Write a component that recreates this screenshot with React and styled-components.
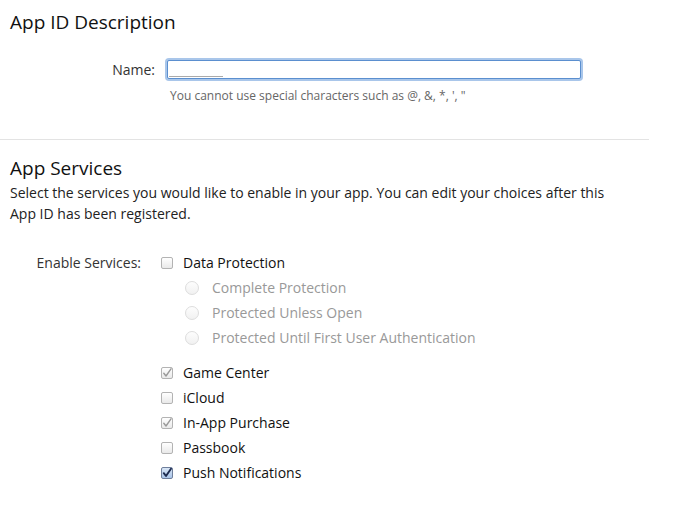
import styled, { createGlobalStyle } from "styled-components";

const GlobalStyle = createGlobalStyle`
  body {
    margin: 0;
    background: #fff;
    font-family: "Open Sans", "Liberation Sans", sans-serif;
    color: #333;
  }
`;

const services = [
  { name: "Game Center", state: "locked" },
  { name: "iCloud", state: "off" },
  { name: "In-App Purchase", state: "locked" },
  { name: "Passbook", state: "off" },
  { name: "Push Notifications", state: "on" },
];

const protections = [
  "Complete Protection",
  "Protected Unless Open",
  "Protected Until First User Authentication",
];

function Check({ state }) {
  return (
    <CheckBox $state={state}>
      {state !== "off" && (
        <svg width="10" height="10" viewBox="0 0 10 10">
          <path
            d="M1.8 5.2 L4 8 L9 0.8"
            fill="none"
            stroke={state === "on" ? "#1d2b4f" : "#9a9a9a"}
            strokeWidth={state === "on" ? 1.9 : 1.4}
            strokeLinecap="round"
            strokeLinejoin="round"
          />
        </svg>
      )}
    </CheckBox>
  );
}

export default function App() {
  return (
    <Page>
      <GlobalStyle />
      <Section>
        <Heading>App ID Description</Heading>
        <FormRow>
          <Label $width={155}>Name:</Label>
          <Field>
            <Input />
            <Hint>You cannot use special characters such as @, &amp;, *, ', "</Hint>
          </Field>
        </FormRow>
      </Section>
      <Divider />
      <Section $top={15}>
        <Heading>App Services</Heading>
        <Description>
          Select the services you would like to enable in your app. You can edit your choices after this
          App ID has been registered.
        </Description>
        <ServicesRow>
          <Label $width={141} $lineHeight={25}>Enable Services:</Label>
          <List>
            <Option>
              <Check state="off" />
              <OptionText>Data Protection</OptionText>
            </Option>
            <SubList>
              {protections.map((p) => (
                <Option key={p}>
                  <Radio />
                  <OptionText $muted>{p}</OptionText>
                </Option>
              ))}
            </SubList>
            <Group>
              {services.map((s) => (
                <Option key={s.name}>
                  <Check state={s.state} />
                  <OptionText>{s.name}</OptionText>
                </Option>
              ))}
            </Group>
          </List>
        </ServicesRow>
      </Section>
    </Page>
  );
}

const Page = styled.div`
  width: 684px;
  height: 513px;
  overflow: hidden;
`;

const Section = styled.section`
  padding: ${({ $top = 9 }) => $top}px 0 0 10px;
`;

const Heading = styled.h2`
  margin: 0;
  font-size: 19px;
  font-weight: 400;
  color: #111;
  line-height: 26px;
`;

const FormRow = styled.div`
  display: flex;
  align-items: flex-start;
  margin-top: 25px;
  margin-left: -10px;
`;

const ServicesRow = styled(FormRow)`
  margin-top: 26px;
`;

const Label = styled.div`
  width: ${({ $width }) => $width}px;
  text-align: right;
  font-size: 14px;
  line-height: ${({ $lineHeight = 20 }) => $lineHeight}px;
  color: #333;
  flex-shrink: 0;
`;

const Field = styled.div`
  display: flex;
  flex-direction: column;
  margin-left: 12px;
`;

const Input = styled.div`
  width: 412px;
  height: 17px;
  border: 1px solid #5b8fcf;
  border-radius: 2px;
  box-shadow: 0 0 0 2px #a9c6ea;
  background: #fff;
  position: relative;
  &::after {
    content: "";
    position: absolute;
    left: 1px;
    bottom: 1px;
    width: 54px;
    height: 1px;
    background: #aaa;
  }
`;

const Hint = styled.div`
  margin: 9px 0 0 3px;
  font-size: 12px;
  line-height: 16px;
  color: #666;
`;

const Divider = styled.hr`
  margin: 35px 0 0 0;
  width: 649px;
  border: none;
  border-top: 1px solid #e3e3e3;
`;

const Description = styled.p`
  margin: 1px 0 0 0;
  max-width: 615px;
  font-size: 14px;
  line-height: 21px;
  color: #222;
`;

const List = styled.div`
  display: flex;
  flex-direction: column;
  margin-left: 20px;
`;

const SubList = styled.div`
  display: flex;
  flex-direction: column;
  padding-left: 24px;
`;

const Group = styled.div`
  display: flex;
  flex-direction: column;
  margin-top: 10px;
`;

const Option = styled.div`
  display: flex;
  align-items: center;
  height: 25px;
`;

const OptionText = styled.span`
  font-size: 14px;
  color: ${({ $muted }) => ($muted ? "#999" : "#111")};
  margin-left: ${({ $muted }) => ($muted ? 13 : 10)}px;
`;

const CheckBox = styled.span`
  width: 10px;
  height: 10px;
  border: 1px solid ${({ $state }) => ($state === "on" ? "#6f7f9c" : "#b3b3b3")};
  border-radius: 2px;
  background: ${({ $state }) =>
    $state === "on"
      ? "linear-gradient(#d9e6f6, #a9c4e8)"
      : "linear-gradient(#ffffff, #e9e9e9)"};
  display: flex;
  align-items: center;
  justify-content: center;
  flex-shrink: 0;
`;

const Radio = styled.span`
  width: 12px;
  height: 12px;
  border: 1px solid #ddd;
  border-radius: 50%;
  background: linear-gradient(#fdfdfd, #f1f1f1);
  flex-shrink: 0;
`;
